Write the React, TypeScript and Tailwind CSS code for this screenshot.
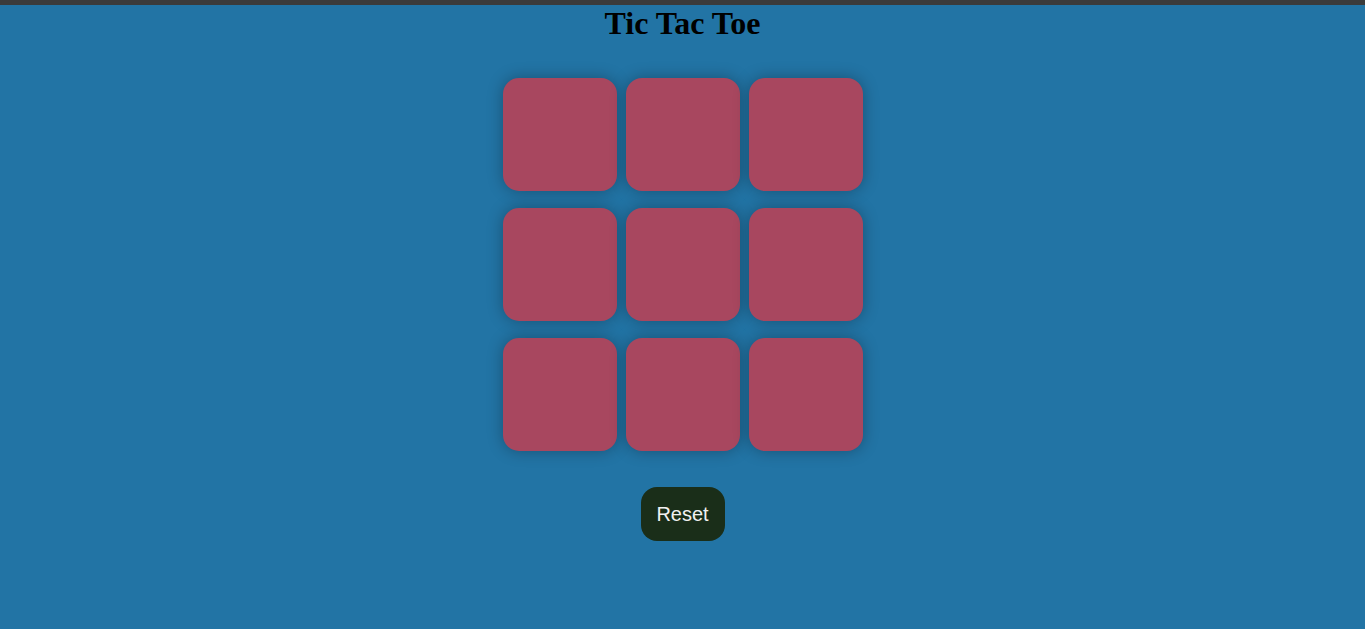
import React from 'react';

const cells = Array.from({ length: 9 }, (_, i) => i);

const App = () => {
  return (
    <div className="min-h-[629px] w-full bg-[#2274a5] font-['Liberation_Serif',serif]">
      {/* top strip */}
      <div className="h-[5px] w-full bg-[#3b3b3b]"></div>

      <h1 className="text-center text-[32px] font-bold leading-[37px] text-black">
        Tic Tac Toe
      </h1>

      <main className="flex flex-col items-center">
        {/* board */}
        <section className="mt-[36px] grid grid-cols-[114px_114px_114px] gap-x-[9px] gap-y-[16.8px]">
          {cells.map((c) => (
            <button
              key={c}
              className="h-[113.2px] w-[114px] rounded-[16px] bg-[#a8475f] shadow-[0_0_16px_rgba(0,0,0,0.3)]"
            ></button>
          ))}
        </section>

        <button className="mt-[35.6px] h-[54px] w-[84px] rounded-[16px] bg-[#1a2e19] font-['Liberation_Sans',sans-serif] text-[20px] text-[#f1f1f1]">
          Reset
        </button>
      </main>
    </div>
  );
};

export default App;
